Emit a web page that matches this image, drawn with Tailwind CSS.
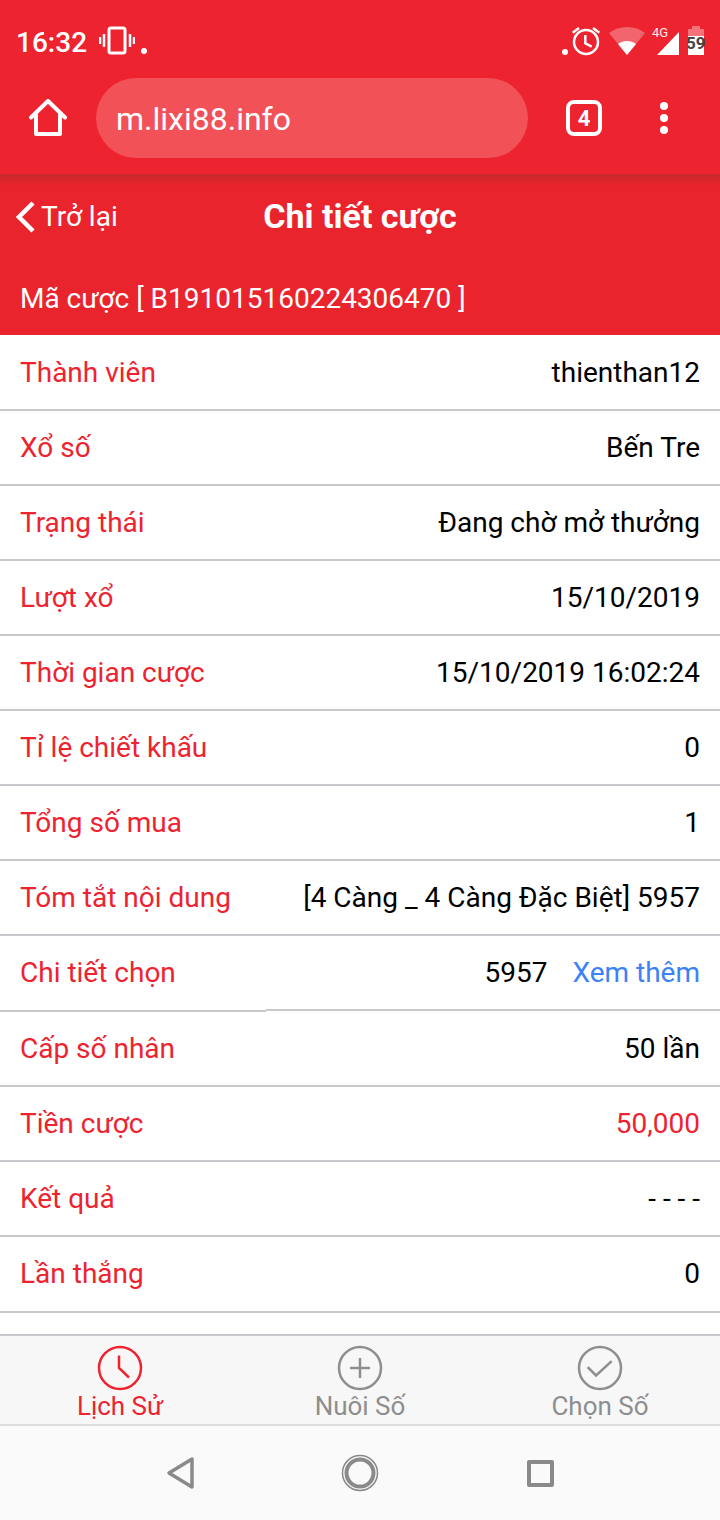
<!DOCTYPE html>
<html lang="vi">
<head>
    <meta charset="UTF-8">
    <title>Chi tiết cược</title>
    <script src="https://cdn.jsdelivr.net/npm/@tailwindcss/browser@4"></script>
</head>
<body class="w-[720px] h-[1520px] overflow-hidden bg-white font-['Roboto',sans-serif] flex flex-col">

    <!-- status bar + browser bar -->
    <div class="h-[174px] shrink-0 bg-[#ed2330] text-white flex flex-col">
        <div class="h-[78px] flex items-center justify-between pl-[16px] pr-[16px] pt-[4px]">
            <div class="flex items-center">
                <span class="text-[28px] font-medium leading-none pt-[3px]">16:32</span>
                <svg class="ml-[12px]" width="36" height="30" viewBox="0 0 36 30" fill="none" stroke="white">
                    <rect x="10" y="2" width="16" height="25" rx="2" stroke-width="3"/>
                    <path d="M5 8v13M1 11v7M31 8v13M35 11v7" stroke-width="2.5"/>
                </svg>
                <span class="w-[6px] h-[6px] rounded-full bg-white ml-[6px] mt-[20px]"></span>
            </div>
            <div class="flex items-center">
                <span class="w-[6px] h-[6px] rounded-full bg-white mt-[22px] mr-[3px]"></span>
                <svg width="30" height="30" viewBox="0 0 30 30" fill="none" stroke="white" stroke-width="2.5">
                    <circle cx="15" cy="16" r="12"/>
                    <path d="M14.300 9v8.300l6.400 3.400M1.700 6.700 8 2M28.300 6.700 22 2"/>
                </svg>
                <svg class="ml-[8px]" width="36" height="28" viewBox="0 0 36 28">
                    <path d="M0 6C10-2 26-2 36 6L18 28Z" fill="white" fill-opacity="0.3"/>
                    <path d="M9 17c5-4 13-4 18 0l-9 11Z" fill="white"/>
                </svg>
                <div class="relative w-[27px] h-[28px] ml-[7px]">
                    <span class="absolute left-0 top-[-1px] text-[13px] leading-none text-white/90">4G</span>
                    <svg class="absolute left-[5px] top-[5px]" width="22" height="23" viewBox="0 0 22 23"><path d="M22 0V23H0Z" fill="white"/></svg>
                </div>
                <div class="relative w-[16px] h-[26px] mt-[2px] ml-[9px] bg-white">
                    <span class="absolute left-[4px] top-[-3px] w-[8px] h-[3px] bg-[#f4727a]"></span>
                    <span class="absolute left-0 top-0 w-full h-[7px] bg-[#f4727a]"></span>
                    <span class="absolute left-[-2px] top-[6px] text-[17px] font-bold leading-none text-[#444]">59</span>
                </div>
            </div>
        </div>
        <div class="flex items-center h-[80px]">
            <svg class="ml-[29px]" width="38" height="38" viewBox="0 0 38 38" fill="none" stroke="white" stroke-width="4" stroke-linejoin="round" stroke-linecap="round">
                <path d="M2 18.500 19 2l17 16.500M7 15v20h24V15"/>
            </svg>
            <div class="ml-[29px] w-[432px] h-[80px] rounded-[40px] bg-[#f25158] pl-[20px] pt-[2px] flex items-center text-[32px]">m.lixi88.info</div>
            <div class="ml-[38px] w-[36px] h-[36px] rounded-[8px] border-[4px] border-white flex items-center justify-center text-[22px] font-bold">4</div>
            <div class="ml-[58px] flex flex-col gap-[4px]">
                <span class="w-[8px] h-[8px] rounded-full bg-white"></span>
                <span class="w-[8px] h-[8px] rounded-full bg-white"></span>
                <span class="w-[8px] h-[8px] rounded-full bg-white"></span>
            </div>
        </div>
    </div>

    <!-- page header -->
    <div class="h-[161px] shrink-0 bg-[#ea242d] text-white flex flex-col relative">
        <div class="absolute inset-x-0 top-0 h-[12px] bg-gradient-to-b from-[#c9272c] to-[#ea242d]"></div>
        <div class="relative h-[86px] flex items-center justify-center">
            <div class="absolute left-[16px] top-[27px] flex items-center">
                <svg width="20" height="32" viewBox="0 0 20 32" fill="none" stroke="white" stroke-width="4.500"><path d="M17 2 3 16l14 14"/></svg>
                <span class="ml-[5px] text-[28px] leading-none">Trở lại</span>
            </div>
            <span class="text-[34px] font-bold mt-[-1px]">Chi tiết cược</span>
        </div>
        <div class="pl-[20px] text-[28px] leading-[34px] mt-[22px]">Mã cược [ B191015160224306470 ]</div>
    </div>

    <!-- detail rows -->
    <div class="flex-1 pt-[0.5px] text-[28px] text-black">
        <div class="h-[75.08px] border-b-2 border-[#c8c7cc] px-[20px] pt-[1px] flex items-center justify-between"><span class="text-[#ed2330]">Thành viên</span><span>thienthan12</span></div>
        <div class="h-[75.08px] border-b-2 border-[#c8c7cc] px-[20px] pt-[1px] flex items-center justify-between"><span class="text-[#ed2330]">Xổ số</span><span>Bến Tre</span></div>
        <div class="h-[75.08px] border-b-2 border-[#c8c7cc] px-[20px] pt-[1px] flex items-center justify-between"><span class="text-[#ed2330]">Trạng thái</span><span>Đang chờ mở thưởng</span></div>
        <div class="h-[75.08px] border-b-2 border-[#c8c7cc] px-[20px] pt-[1px] flex items-center justify-between"><span class="text-[#ed2330]">Lượt xổ</span><span>15/10/2019</span></div>
        <div class="h-[75.08px] border-b-2 border-[#c8c7cc] px-[20px] pt-[1px] flex items-center justify-between"><span class="text-[#ed2330]">Thời gian cược</span><span>15/10/2019 16:02:24</span></div>
        <div class="h-[75.08px] border-b-2 border-[#c8c7cc] px-[20px] pt-[1px] flex items-center justify-between"><span class="text-[#ed2330]">Tỉ lệ chiết khấu</span><span>0</span></div>
        <div class="h-[75.08px] border-b-2 border-[#c8c7cc] px-[20px] pt-[1px] flex items-center justify-between"><span class="text-[#ed2330]">Tổng số mua</span><span>1</span></div>
        <div class="h-[75.08px] border-b-2 border-[#c8c7cc] px-[20px] pt-[1px] flex items-center justify-between"><span class="text-[#ed2330]">Tóm tắt nội dung</span><span>[4 Càng _ 4 Càng Đặc Biệt] 5957</span></div>
        <div class="relative h-[75.08px] border-b-2 border-[#c8c7cc] px-[20px] pt-[1px] flex items-center justify-between"><span class="text-[#ed2330]">Chi tiết chọn</span><span>5957<span class="ml-[25px] text-[#3b82f6]">Xem thêm</span></span>
            <div class="absolute left-0 bottom-[-3px] w-[266px] h-[3px] bg-[#c8c7cc] border-t border-white"></div>
        </div>
        <div class="mt-[1px] h-[75.08px] border-b-2 border-[#c8c7cc] px-[20px] pt-[1px] flex items-center justify-between"><span class="text-[#ed2330]">Cấp số nhân</span><span>50 lần</span></div>
        <div class="h-[75.08px] border-b-2 border-[#c8c7cc] px-[20px] pt-[1px] flex items-center justify-between"><span class="text-[#ed2330]">Tiền cược</span><span class="text-[#ed2330]">50,000</span></div>
        <div class="h-[75.08px] border-b-2 border-[#c8c7cc] px-[20px] pt-[1px] flex items-center justify-between"><span class="text-[#ed2330]">Kết quả</span><span>- - - -</span></div>
        <div class="h-[75.08px] border-b-2 border-[#c8c7cc] px-[20px] pt-[1px] flex items-center justify-between"><span class="text-[#ed2330]">Lần thắng</span><span>0</span></div>
    </div>

    <!-- tab bar -->
    <div class="h-[92px] shrink-0 bg-[#f7f7f7] border-y-2 border-t-[#c8c7cc] border-b-[#dcdcdc] grid grid-cols-3 text-[26px] text-[#8e8e8e]">
        <div class="flex flex-col items-center pt-[9px] text-[#ed2330]">
            <svg width="46" height="46" viewBox="0 0 46 46" fill="none" stroke="currentColor" stroke-width="2.500"><circle cx="23" cy="23" r="21"/><path d="M22 10.500V23l10 9.500"/></svg>
            <span class="leading-[30px]">Lịch Sử</span>
        </div>
        <div class="flex flex-col items-center pt-[9px]">
            <svg width="46" height="46" viewBox="0 0 46 46" fill="none" stroke="currentColor" stroke-width="2.500"><circle cx="23" cy="23" r="21"/><path d="M23 13v20M13 23h20"/></svg>
            <span class="leading-[30px]">Nuôi Số</span>
        </div>
        <div class="flex flex-col items-center pt-[9px]">
            <svg width="46" height="46" viewBox="0 0 46 46" fill="none" stroke="currentColor" stroke-width="2.500"><circle cx="23" cy="23" r="21"/><path d="M10.700 22.200l8.300 8.300 15.700-14.300"/></svg>
            <span class="leading-[30px]">Chọn Số</span>
        </div>
    </div>

    <!-- android nav bar -->
    <div class="h-[94px] shrink-0 bg-[#fafafa] flex items-center justify-center">
        <div class="w-[180px] flex justify-center">
            <svg width="30" height="34" viewBox="0 0 30 34" fill="none" stroke="#8a8a8a" stroke-width="3.500" stroke-linejoin="round"><path d="M27 3v28L4 17Z"/></svg>
        </div>
        <div class="w-[180px] flex justify-center">
            <svg width="38" height="38" viewBox="0 0 38 38" fill="none" stroke="#8a8a8a"><circle cx="19" cy="19" r="17.500" stroke-width="1.500"/><circle cx="19" cy="19" r="13.500" stroke-width="4"/></svg>
        </div>
        <div class="w-[180px] flex justify-center">
            <div class="w-[27px] h-[27px] border-[4px] border-[#8a8a8a] rounded-[2px]"></div>
        </div>
    </div>
</body>
</html>
